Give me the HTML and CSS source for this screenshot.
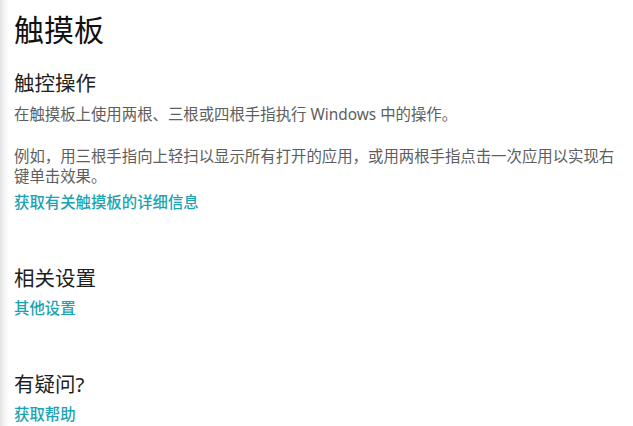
FILE: index.html
```html
<!DOCTYPE html>
<html lang="zh-CN">
<head>
<meta charset="utf-8">
<title>触摸板</title>
<link rel="stylesheet" href="styles.css">
</head>
<body>
<main class="page">
  <h1 class="title">触摸板</h1>
  <section class="group first">
    <h2 class="heading">触控操作</h2>
    <p class="text">在触摸板上使用两根、三根或四根手指执行 Windows 中的操作。</p>
    <p class="text spaced">例如，用三根手指向上轻扫以显示所有打开的应用，或用两根手指点击一次应用以实现右键单击效果。</p>
    <a class="link" href="#">获取有关触摸板的详细信息</a>
  </section>
  <section class="group">
    <h2 class="heading">相关设置</h2>
    <a class="link" href="#">其他设置</a>
  </section>
  <section class="group">
    <h2 class="heading">有疑问?</h2>
    <a class="link" href="#">获取帮助</a>
  </section>
</main>
</body>
</html>
```
FILE: styles.css
```css
html, body {
  margin: 0;
  padding: 0;
  height: 100%;
}
body {
  background: linear-gradient(to right, #e2e2e2 0px, #f3f3f3 4px, #ffffff 9px);
  font-family: "Noto Sans", "Noto Sans CJK SC", sans-serif;
  color: #222;
  overflow: hidden;
}
.page {
  display: flex;
  flex-direction: column;
  padding: 10px 0 0 14px;
  width: 606px;
}
.title {
  margin: 0;
  font-size: 30px;
  line-height: 40px;
  font-weight: 400;
  color: #111;
}
.group {
  display: flex;
  flex-direction: column;
  align-items: flex-start;
  margin-top: 51px;
}
.group.first {
  margin-top: 19px;
}
.heading {
  margin: 0 0 7px 0;
  font-size: 20.5px;
  line-height: 28px;
  font-weight: 400;
  color: #1e1e1e;
}
.group.first .heading {
  margin-bottom: 8px;
}
.text {
  margin: 0;
  font-size: 15.4px;
  line-height: 20px;
  color: #5e5e5e;
}
.text.spaced {
  margin-top: 22px;
  margin-bottom: 6px;
}
.link {
  font-size: 15.4px;
  line-height: 20px;
  font-weight: 500;
  color: #1ba3b1;
  text-decoration: none;
}
```
